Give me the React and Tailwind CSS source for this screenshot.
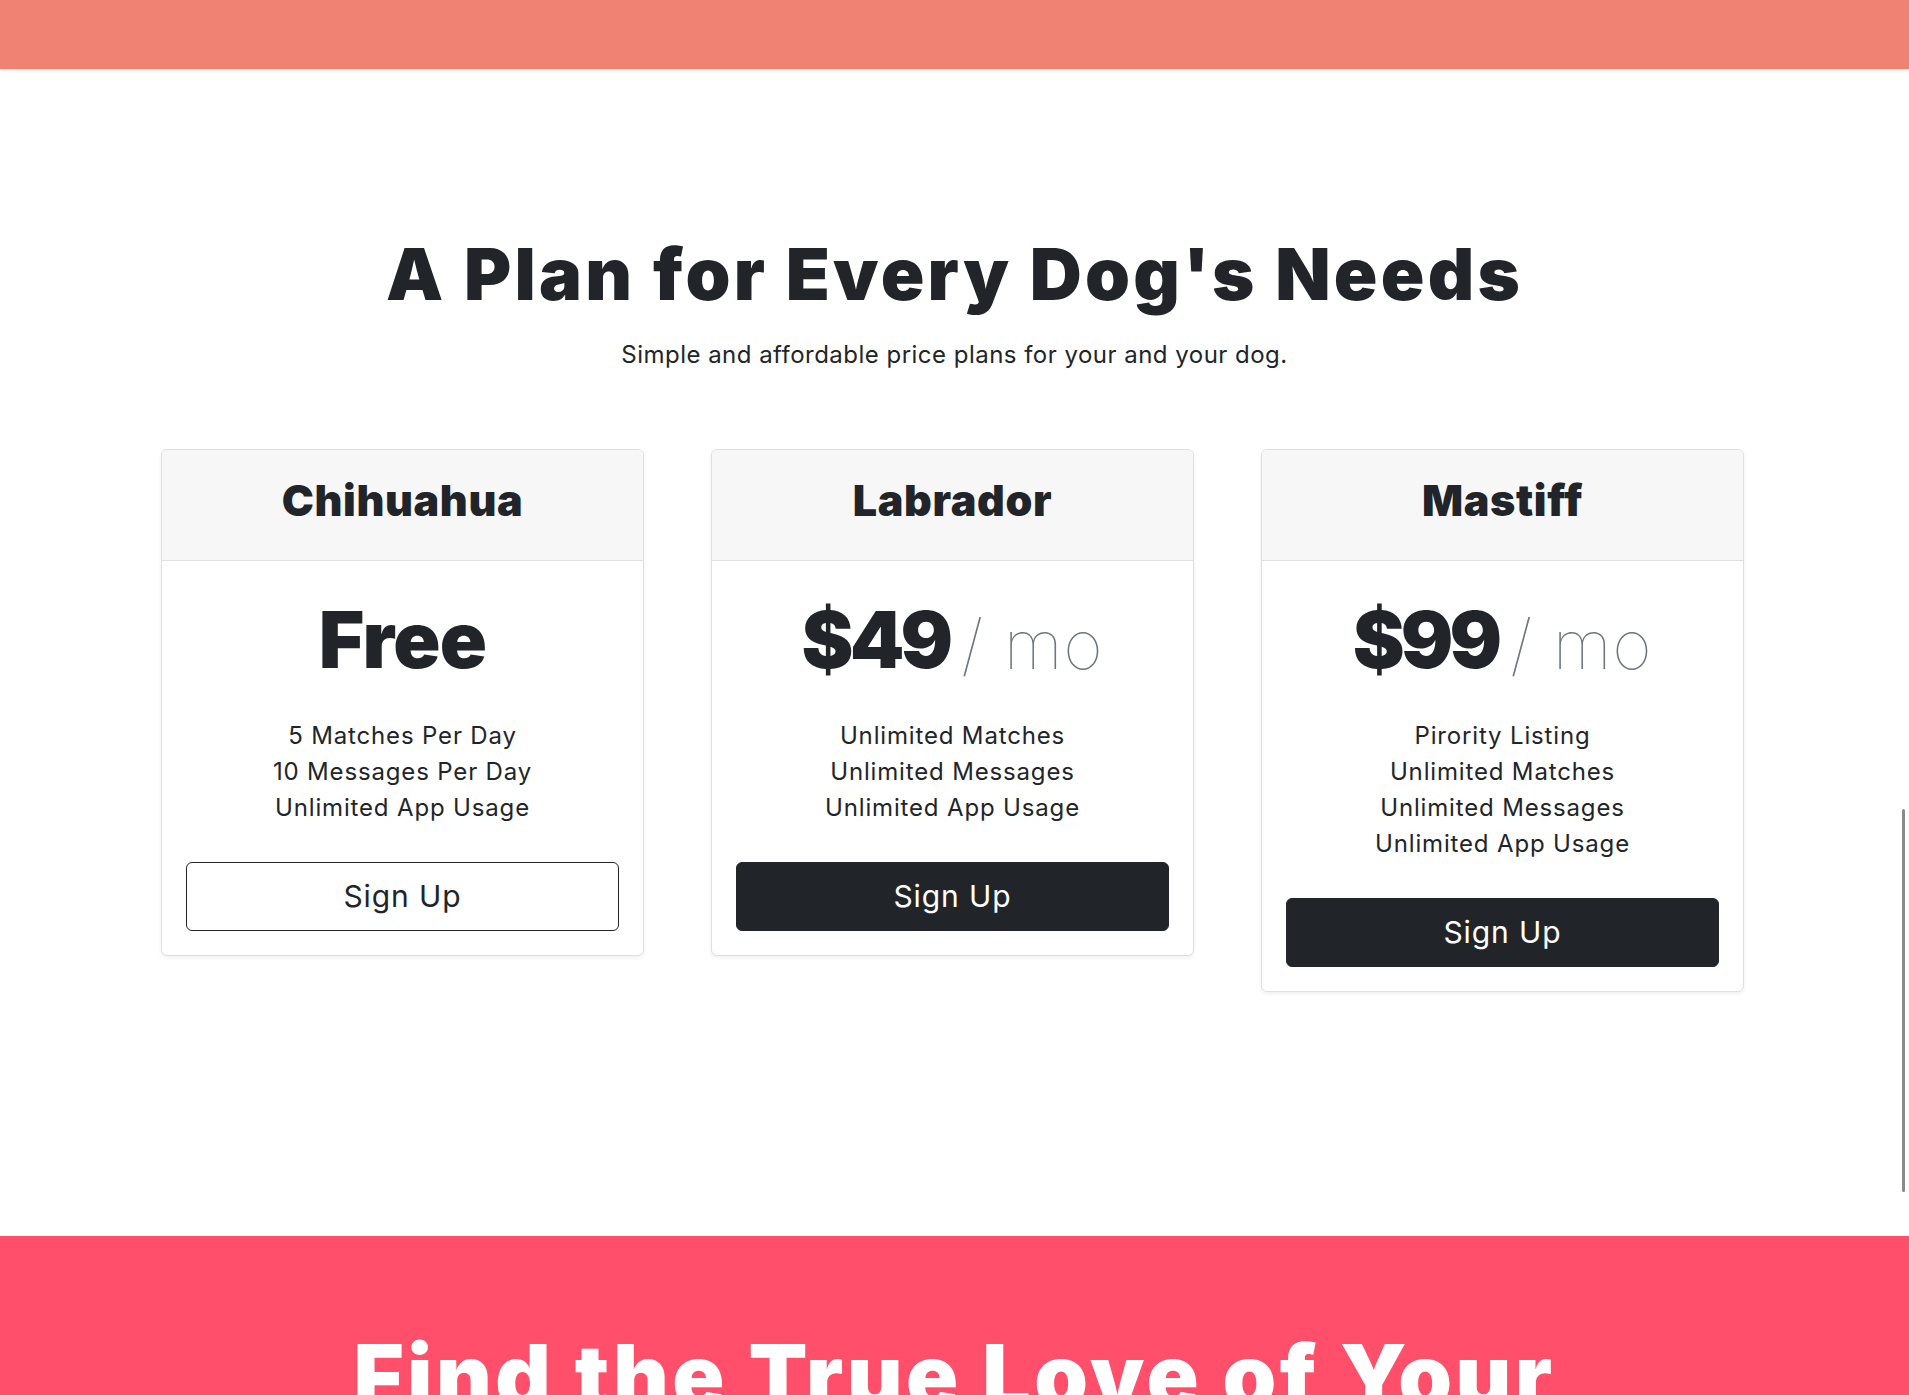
const PLANS = [
  { name: 'Chihuahua', price: 'Free', per: false, features: ['5 Matches Per Day', '10 Messages Per Day', 'Unlimited App Usage'], outline: true },
  { name: 'Labrador',  price: '$49',  per: true,  features: ['Unlimited Matches', 'Unlimited Messages', 'Unlimited App Usage'] },
  { name: 'Mastiff',   price: '$99',  per: true,  features: ['Pirority Listing', 'Unlimited Matches', 'Unlimited Messages', 'Unlimited App Usage'] },
]

function PlanCard({ plan }) {
  return (
    <div className="w-[483px] rounded-[6px] border border-[#dfdfdf] bg-white shadow-[0_2px_4px_rgba(0,0,0,0.06)] overflow-hidden">
      {/* header */}
      <div className="h-[111px] pb-[10px] flex items-center justify-center bg-[#f7f7f7] border-b border-[#dfdfdf]">
        <h3 className="text-[43px] font-black text-[#212529] tracking-[0.015em]">{plan.name}</h3>
      </div>

      {/* body */}
      <div className="p-6 text-center">
        <div className="h-[109px] flex items-center justify-center gap-3">
          <span
            className={
              plan.per
                ? 'text-[78px] font-black text-[#212529] leading-none tracking-[-0.05em]'
                : 'text-[78px] font-black text-[#212529] leading-none tracking-[-0.01em]'
            }
          >
            {plan.price}
          </span>
          {plan.per && (
            <span className="text-[68px] font-thin text-[#6c757d] leading-none mt-2 tracking-[0.01em]">/ mo</span>
          )}
        </div>
        <ul className="mt-6 text-[24px] leading-[36px] text-[#212529] tracking-[0.035em]">
          {plan.features.map(f => <li key={f}>{f}</li>)}
        </ul>
        <button
          className={
            plan.outline
              ? 'mt-9 w-full h-[69px] rounded-[6px] border border-[#212529] bg-white text-[#212529] text-[30px] tracking-[0.03em]'
              : 'mt-9 w-full h-[69px] rounded-[6px] border border-[#212529] bg-[#212529] text-white text-[30px] tracking-[0.03em]'
          }
        >
          Sign Up
        </button>
      </div>
    </div>
  )
}

export default function App() {
  return (
    <div className="min-h-screen bg-white font-['Inter',sans-serif] text-[#212529] overflow-hidden">

      {/* ── Top nav strip ───────────────────────────── */}
      <div className="h-[69px] bg-[#ef8273] shadow-[0_2px_4px_rgba(0,0,0,0.08)] relative z-10" />

      {/* ── Pricing ─────────────────────────────────── */}
      <section className="pt-[162px] pb-[244px]">
        <div className="text-center">
          <h2 className="text-[72px] font-black leading-[86px] tracking-[0.045em]">A Plan for Every Dog's Needs</h2>
          <p className="mt-5 text-[24px] leading-[36px] tracking-[0.02em]">Simple and affordable price plans for your and your dog.</p>
        </div>

        <div className="mt-[76px] flex items-start justify-center gap-[67px] pr-[4px]">
          {PLANS.map(p => <PlanCard key={p.name} plan={p} />)}
        </div>
      </section>

      {/* ── CTA ─────────────────────────────────────── */}
      <section className="bg-[#ff4f6a] h-[400px] pt-[90px] text-center">
        <h2 className="text-[86px] font-black leading-[100px] text-white tracking-[0.04em]">Find the True Love of Your</h2>
      </section>

      {/* overlay scrollbar thumb */}
      <div className="fixed right-[4px] top-[809px] w-[3px] h-[383px] bg-[#8a8a8a] rounded-full" />
    </div>
  )
}
